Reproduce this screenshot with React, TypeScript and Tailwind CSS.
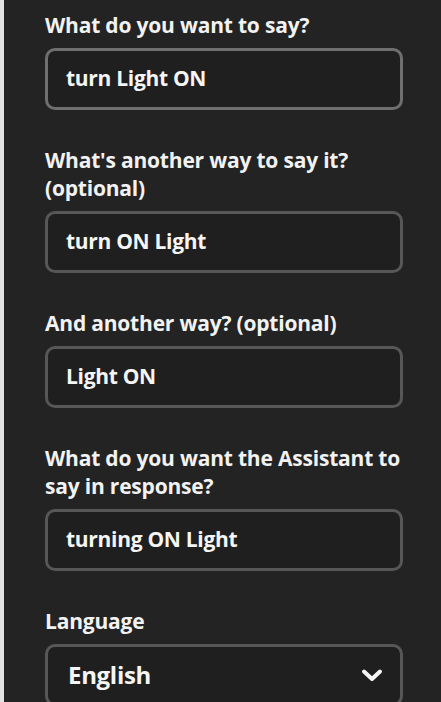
import React from "react";

const font = { fontFamily: "'Open Sans', Lato, sans-serif" };

function Field({ label, value, focused }: { label: React.ReactNode; value: string; focused?: boolean }) {
  return (
    <div className="flex flex-col">
      <div className="text-[21px] leading-[28px] font-bold text-[#f2f2f2] tracking-[-0.2px]">{label}</div>
      <div
        className={`mt-[9px] h-[62px] w-[358px] rounded-[10px] border-[3px] ${
          focused ? "border-[#6f6f6f]" : "border-[#575757]"
        } bg-[#1f1f1f] flex items-center pl-[18px]`}
      >
        <span className="text-[21px] font-bold text-[#f5f5f5] tracking-[-0.3px]">{value}</span>
      </div>
    </div>
  );
}

export default function App() {
  return (
    <div className="w-[441px] h-[702px] overflow-hidden flex bg-[#232323]" style={font}>
      <div className="w-[4px] bg-[#e3e3e3] shrink-0" />
      <div className="flex flex-col gap-[36px] pl-[41px] pt-[11px]">
        <Field label="What do you want to say?" value="turn Light ON" focused />
        <Field
          label={
            <>
              What's another way to say it?
              <br />
              (optional)
            </>
          }
          value="turn ON Light"
        />
        <Field label="And another way? (optional)" value="Light ON" />
        <Field
          label={
            <>
              What do you want the Assistant to
              <br />
              say in response?
            </>
          }
          value="turning ON Light"
        />
        <div className="flex flex-col">
          <div className="text-[21px] leading-[28px] font-bold text-[#f2f2f2] tracking-[-0.2px]">Language</div>
          <div className="mt-[9px] h-[62px] w-[358px] rounded-[10px] border-[3px] border-[#575757] bg-[#1f1f1f] flex items-center justify-between pl-[20px] pr-[17px]">
            <span className="text-[24px] font-bold text-[#f5f5f5] tracking-[-0.3px]">English</span>
            <svg width="22" height="15" viewBox="0 0 22 15" fill="none">
              <path d="M3 3.5 L11 11 L19 3.5" stroke="#f5f5f5" strokeWidth="4" strokeLinecap="round" strokeLinejoin="round" />
            </svg>
          </div>
        </div>
      </div>
    </div>
  );
}
